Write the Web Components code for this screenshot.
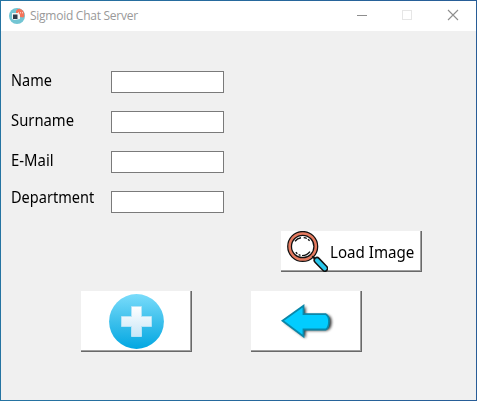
<!DOCTYPE html>
<html lang="en"><head><meta charset="utf-8"><title>Sigmoid Chat Server</title>
<style>html,body{margin:0;height:100%;overflow:hidden;background:#f0f0f0}</style></head><body>
<chat-window></chat-window>
<script>
const define=(name,html)=>customElements.define(name,class extends HTMLElement{
  constructor(){super();this.attachShadow({mode:'open'}).innerHTML=html;}
});
define('app-logo',`<style>:host{display:block;width:16px;height:16px}svg{display:block}</style>
<svg width="16" height="16" viewBox="0 0 16 16"><circle cx="8" cy="8" r="8" fill="#73c5d3"/>
<path d="M7 3Q8 .8 10.500 .8 15 2 15.300 6 15.500 8 14.500 9.500L11 9 7 5Z" fill="#f5745a"/>
<path d="M9 4.800h1m1 0h1m1 0h1" stroke="#fff" stroke-width="1" opacity=".8"/>
<path d="M3 5h6.500l1.500 1.500V11l-5.500 1L3 11z" fill="#f4f6f6"/><rect x="4" y="6.500" width="4.500" height="4.500" fill="#303c4b"/></svg>`);
define('title-bar',`<style>:host{display:flex;height:30px;background:#fff;align-items:center;padding-left:8px;box-sizing:border-box;font:12px/16px "Open Sans",sans-serif;color:#999}
.t{margin-left:5px;flex:1;letter-spacing:-.26px;white-space:nowrap}svg{display:block}</style>
<app-logo></app-logo><span class="t"><slot></slot></span>
<svg width="137" height="30" viewBox="0 0 137 30" fill="none" shape-rendering="crispEdges"><path d="M18 14.500h10" stroke="#8e8e8e"/><path d="M63.500 9.500h9v9h-9z" stroke="#e6e6e6"/><path d="M109 9l10 10M119 9l-10 10" stroke="#8e8e8e" stroke-width="1.100" shape-rendering="auto"/></svg>`);
define('text-field',`<style>:host{display:grid;grid-template-columns:100px 113px;height:22px}
label{font:16px/20px "Noto Sans",sans-serif;color:#000;white-space:nowrap;justify-self:start;transform:scaleX(var(--fit,1));transform-origin:0 0;margin-top:var(--lift,-1px)}
input{box-sizing:border-box;width:113px;height:22px;margin:0;padding:0 2px;border:1px solid #7a7a7a;border-radius:0;background:#fff;outline:0;font:16px "Noto Sans",sans-serif}</style>
<label for="f"><slot></slot></label><input id="f">`);
define('push-button',`<style>:host{display:block}
button{box-sizing:border-box;width:100%;height:100%;margin:0;padding:0;background:#fff;border:0;box-shadow:inset -1px -1px #696969,inset -2px -2px #a0a0a0;display:flex;align-items:center;justify-content:var(--pack,center);font:16px/20px "Noto Sans",sans-serif;color:#000;border-radius:0}</style><button><slot></slot></button>`);
define('search-icon',`<style>:host{display:block}svg{display:block}</style><svg width="42" height="41" viewBox="0 0 42 41" fill="none">
<circle cx="16.700" cy="15.500" r="13.100" stroke="#111" stroke-width="5"/><circle cx="16.700" cy="15.500" r="13.100" stroke="#e67b60" stroke-width="2.500"/>
<path d="M9 10.200Q11.300 7.200 15 6.700M17.700 6.600Q19.500 6.800 20.800 7.500M22 8.300l1.600 1.400M9.800 21.200l1.500 1.500M12.600 23.600l1.900 .7M16 24.600Q21 24.500 24 20.600" stroke="#111" stroke-width="1.400"/>
<path d="M26.300 25.200l3.200 3" stroke="#111" stroke-width="2"/><path d="M31 29.300l7.800 8.100" stroke="#111" stroke-width="7" stroke-linecap="round"/><path d="M31 29.300l7.800 8.100" stroke="#29c8ed" stroke-width="4" stroke-linecap="round"/></svg>`);
define('plus-icon',`<style>:host{display:block}svg{display:block}</style><svg width="55" height="55" viewBox="0 0 55 55"><defs>
<linearGradient id="a" x2="0" y2="1"><stop stop-color="#7adcfb"/><stop offset=".5" stop-color="#3dc0ec"/><stop offset="1" stop-color="#02a7e2"/></linearGradient>
<linearGradient id="b" x2="0" y2="1"><stop stop-color="#fff"/><stop offset="1" stop-color="#c8e6f7"/></linearGradient></defs>
<circle cx="27.500" cy="27.500" r="27.400" fill="url(#a)"/><path d="M22.500 12.500h10v10h10v10h-10v10h-10v-10h-10v-10h10z" fill="url(#b)" stroke="#b5e4f7"/></svg>`);
define('back-icon',`<style>:host{display:block}svg{display:block}</style><svg width="56" height="40" viewBox="0 0 56 40"><defs><filter id="s" x="-20%" y="-20%" width="150%" height="150%"><feGaussianBlur stdDeviation="1.500"/></filter></defs>
<path d="M4 18.500L25 3v8.500h21Q51 12 51 18.500 51 26 46 27H25v7.500Z" fill="#000" opacity=".85" transform="translate(1.500 1.500)" filter="url(#s)"/>
<path d="M3.500 18.700L24.500 3.700v8.500h22.300Q50 14 50 19.200 50 25.500 46.800 27.500H24.500v7Z" fill="#02ccff" stroke="#0a87a9" stroke-width="1.800"/></svg>`);
define('chat-window',`<style>
:host{display:block;box-sizing:border-box;width:477px;height:401px;background:linear-gradient(90deg,#2574a2,#285d97);padding:1px}
.w{display:flex;flex-direction:column;height:399px;background:#f0f0f0}
main{padding:40px 0 0 110px;display:flex;flex-direction:column}
form{display:flex;flex-direction:column;gap:18px;margin-left:-100px}
.load{width:141px;height:41px;margin:18px 0 0 170px;--pack:flex-start}.row{display:flex;gap:59px;margin:19px 0 0 -30px}.row push-button{width:111px;height:61px}
search-icon{margin-left:5px}
.lt{margin-left:1.500px;white-space:nowrap;transform:scaleX(.945);transform-origin:0 0}
</style><div class="w"><title-bar>Sigmoid Chat Server</title-bar><main><form>
<text-field style="--fit:.905">Name</text-field><text-field style="--fit:.925">Surname</text-field><text-field style="--fit:.93">E-Mail</text-field><text-field style="--fit:.908;--lift:-4px">Department</text-field></form>
<push-button class="load"><search-icon></search-icon><span class="lt">Load Image</span></push-button>
<div class="row"><push-button><plus-icon></plus-icon></push-button><push-button><back-icon></back-icon></push-button></div></main></div>`);
</script></body></html>
